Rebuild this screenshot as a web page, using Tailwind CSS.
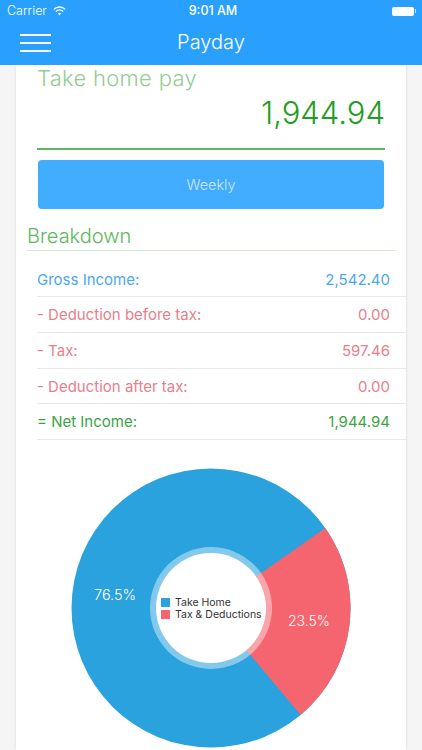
<!DOCTYPE html>
<html lang="en">
<head>
  <meta charset="UTF-8" />
  <title>Payday</title>
  <meta name="viewport" content="width=device-width, initial-scale=1.0" />
  <script src="https://cdn.jsdelivr.net/npm/@tailwindcss/browser@4"></script>
</head>
<body class="w-[422px] h-[750px] overflow-hidden bg-[#f5f5f5] font-['Inter','Liberation_Sans',sans-serif]">

  <!-- header -->
  <header class="h-[65px] bg-[#2aa0fe] text-white relative z-10">
    <div class="h-[22px] flex items-center justify-between pl-[7px] pr-[6px] text-[12.5px]">
      <div class="flex items-center gap-[6px] w-[100px]">
        <span class="font-light">Carrier</span>
        <svg width="13" height="10" viewBox="0 0 13 10" fill="none" stroke="white" stroke-width="1.3">
          <path d="M0.8 3.4a8 8 0 0 1 11.4 0" />
          <path d="M2.9 5.5a5 5 0 0 1 7.2 0" />
          <path d="M6.5 9.6L4.9 7.6a2.3 2.3 0 0 1 3.2 0z" fill="white" stroke="none" />
        </svg>
      </div>
      <span class="font-medium text-[12.5px] ml-[3px]">9:01 AM</span>
      <div class="w-[100px] flex justify-end items-center">
        <div class="w-[22px] h-[9px] bg-white rounded-[2px]"></div>
        <div class="w-[1px] h-[4px] bg-white/70 ml-[1px]"></div>
      </div>
    </div>
    <div class="h-[43px] flex items-center relative">
      <div class="ml-[20px] mt-[-2px] w-[31px] flex flex-col gap-[6px]">
        <div class="h-[2px] bg-white"></div>
        <div class="h-[2px] bg-white"></div>
        <div class="h-[2px] bg-white"></div>
      </div>
      <div class="absolute inset-x-0 top-[1px] text-center text-[20px] font-light leading-[38px]">Payday</div>
    </div>
  </header>

  <!-- card -->
  <main class="w-[390px] h-[685px] ml-[16px] bg-white shadow-[0_0_3px_rgba(0,0,0,0.12)] overflow-hidden">
    <div class="ml-[21px] mt-[-2px] text-[22px] leading-[30px] font-light tracking-[0.3px] text-[#93cd94]">Take home pay</div>
    <div class="mr-[21px] mt-[1px] text-right text-[31px] leading-[38px] font-light text-[#1f9d24]">1,944.94</div>

    <div class="mx-[21px] mt-[16px] h-[1.5px] bg-[#5cb85c]"></div>

    <button class="block mx-[22px] mt-[10px] pt-[2px] w-[346px] h-[49px] rounded-[4px] bg-[#42acff] text-[#cfe8fd] text-[14.5px] font-light">Weekly</button>

    <div class="mx-[11px] mt-[14px] pb-[1px] border-b-[1.5px] border-[#cdeacd] text-[20px] leading-[26px] font-light text-[#5cb85c]">Breakdown</div>

    <div class="mt-[11px] text-[15px] font-normal">
      <div class="h-[35.7px] pt-[2px] ml-[21px] pr-[16px] flex items-center justify-between border-b border-[#e8e8e8] text-[#4aa8ee]">
        <span>Gross Income:</span><span>2,542.40</span>
      </div>
      <div class="h-[35.7px] pt-[2px] ml-[21px] pr-[16px] flex items-center justify-between border-b border-[#e8e8e8] text-[#e8808a]">
        <span>- Deduction before tax:</span><span>0.00</span>
      </div>
      <div class="h-[35.7px] pt-[2px] ml-[21px] pr-[16px] flex items-center justify-between border-b border-[#e8e8e8] text-[#e8808a]">
        <span>- Tax:</span><span>597.46</span>
      </div>
      <div class="h-[35.7px] pt-[2px] ml-[21px] pr-[16px] flex items-center justify-between border-b border-[#e8e8e8] text-[#e8808a]">
        <span>- Deduction after tax:</span><span>0.00</span>
      </div>
      <div class="h-[35.7px] pt-[2px] ml-[21px] pr-[16px] flex items-center justify-between border-b border-[#e8e8e8] text-[#3aa53f]">
        <span>= Net Income:</span><span>1,944.94</span>
      </div>
    </div>

    <!-- donut -->
    <div class="relative w-[280px] h-[280px] ml-[55px] mt-[28px]">
      <svg width="280" height="280" viewBox="-140 -140 280 280">
        <circle r="139.5" fill="#29a2de" />
        <path d="M0 0L114.3 -80A139.5 139.5 0 0 1 89.7 106.9Z" fill="#f4656f" />
        <circle r="61" fill="white" fill-opacity="0.42" />
        <circle r="55" fill="white" />
      </svg>
      <div class="absolute left-[23px] top-[120px] text-[14.5px] leading-none font-light text-white">76.5%</div>
      <div class="absolute left-[217px] top-[146px] text-[14px] leading-none font-light text-white">23.5%</div>
      <div class="absolute left-[90px] top-[129px] text-[10.5px] leading-[12px] text-[#333] flex flex-col">
        <div class="flex items-center gap-[5px]"><span class="w-[9px] h-[9px] bg-[#29a2de]"></span>Take Home</div>
        <div class="flex items-center gap-[5px]"><span class="w-[9px] h-[9px] bg-[#f4656f]"></span>Tax &amp; Deductions</div>
      </div>
    </div>
  </main>
</body>
</html>
